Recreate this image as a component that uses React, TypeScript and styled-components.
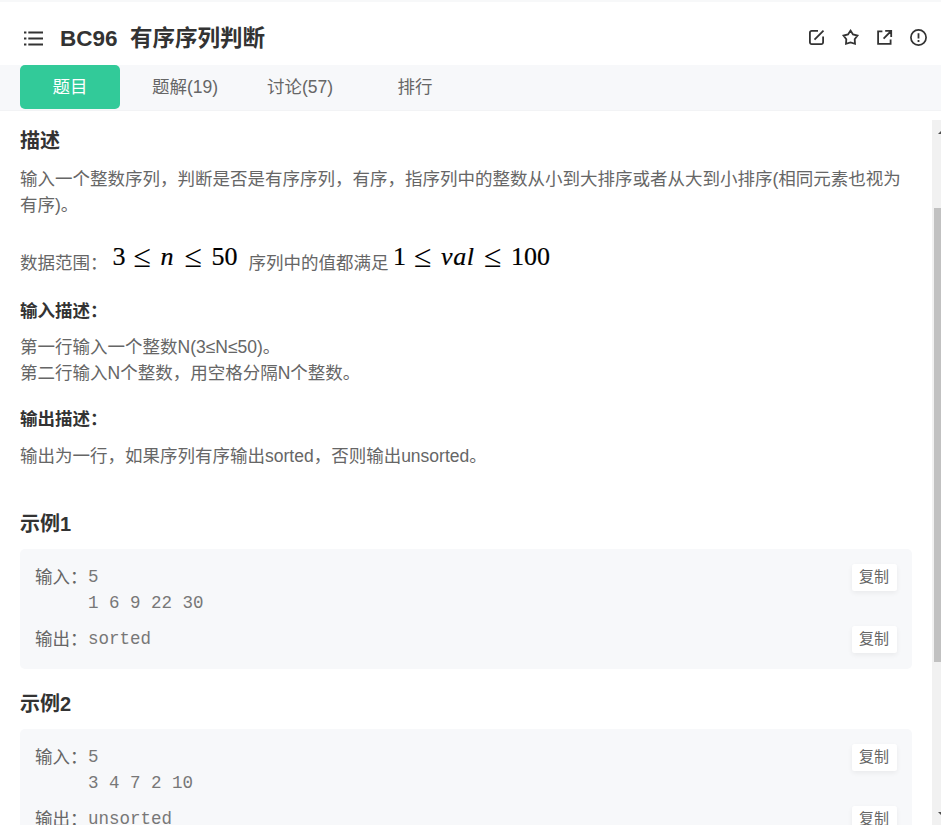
import React from "react";
import styled, { createGlobalStyle } from "styled-components";

const GlobalStyle = createGlobalStyle`
  * { box-sizing: border-box; }
  body {
    margin: 0;
    background: #fff;
    overflow: hidden;
    font-family: "Liberation Sans", "Noto Sans CJK SC", sans-serif;
    font-size: 17.5px;
    line-height: 26.25px;
    color: #666;
  }
`;

const Page = styled.div`
  display: flex;
  flex-direction: column;
  width: 941px;
  height: 825px;
  overflow: hidden;
  border-top: 2px solid #f7f8f9;
`;

const Header = styled.header`
  display: flex;
  align-items: center;
  flex: none;
  height: 63px;
  padding: 0 13px 0 23px;
`;

const Title = styled.h1`
  display: flex;
  gap: 12.5px;
  flex: 1;
  margin: 10px 0 0 16px;
  font-size: 22.5px;
  line-height: 30px;
  font-weight: 700;
  color: #333;
`;

const Icon = styled.svg`
  display: block;
  flex: none;
  margin-top: 8px;
  fill: none;
  stroke: #333;
  stroke-width: 1.8;
`;

const Actions = styled.div`
  display: flex;
  gap: 14px;
`;

const TabBar = styled.nav`
  display: flex;
  flex: none;
  gap: 15px;
  height: 45px;
  padding-left: 20px;
  background: #f7f8fa;
  border-bottom: 1px solid #f2f3f5;
  box-sizing: content-box;
`;

const Tab = styled.a<{ $active?: boolean }>`
  width: 100px;
  height: 44px;
  line-height: 44px;
  text-align: center;
  border-radius: 5px;
  color: ${(p) => (p.$active ? "#fff" : "#666")};
  background: ${(p) => (p.$active ? "#32ca99" : "transparent")};
`;

const Body = styled.div`
  display: flex;
  justify-content: space-between;
  flex: 1;
  min-height: 0;
  padding-top: 9px;
`;

const Content = styled.main`
  width: 892px;
  margin-left: 20px;
  padding-top: 6px;
`;

const SectionTitle = styled.h2`
  margin: 0;
  font-size: 20px;
  line-height: 30px;
  font-weight: 700;
  color: #333;
`;

const SubTitle = styled.h3`
  margin: 0;
  font-size: 17.5px;
  line-height: 26px;
  font-weight: 700;
  color: #333;
`;

const Paragraph = styled.p<{ $top?: number; $bottom?: number }>`
  margin: ${(p) => p.$top ?? 0}px 0 ${(p) => p.$bottom ?? 0}px;
  white-space: nowrap;
`;

const RangeLine = styled.div`
  display: flex;
  align-items: flex-end;
  height: 32px;
  margin: 26px 0 21.5px;
  white-space: nowrap;
`;

const Formula = styled.span<{ $left: number; $right: number }>`
  display: flex;
  align-items: baseline;
  height: 37px;
  margin: 0 ${(p) => p.$right}px 0 ${(p) => p.$left}px;
  font-family: "Liberation Serif", serif;
  font-size: 26px;
  line-height: 30px;
  color: #000;
`;

const Term = styled.span<{ $width: number; $italic?: boolean }>`
  width: ${(p) => p.$width}px;
  font-style: ${(p) => (p.$italic ? "italic" : "normal")};
  letter-spacing: ${(p) => (p.$italic ? "0.6px" : "0")};
  -webkit-text-stroke: 0.2px #000;
`;

const Relation = styled.span`
  width: 27px;
  font-size: 32px;
  line-height: 30px;
  transform: translateY(2px);
`;

const Example = styled.section`
  display: flex;
  flex-direction: column;
  gap: 10px;
  height: 120px;
  margin: 10px 0 20px;
  padding: 15px;
  background: #f7f8fa;
  border-radius: 5px;
  line-height: 26px;
`;

const ExampleRow = styled.div`
  display: flex;
  align-items: flex-start;
`;

const Label = styled.span`
  width: 53px;
`;

const Code = styled.pre`
  flex: 1;
  margin: 0;
  font-family: "Liberation Mono", monospace;
  font-size: 17.5px;
  line-height: 26px;
  color: #777;
`;

const CopyButton = styled.button`
  width: 45px;
  height: 27px;
  padding: 0 1px 1px 0;
  border: 0;
  border-radius: 2.5px;
  background: #fff;
  box-shadow: 0 2px 5px rgba(0, 0, 0, 0.06);
  font-family: inherit;
  font-size: 15px;
  line-height: 26px;
  color: #666;
`;

const ScrollTrack = styled.div`
  display: flex;
  flex-direction: column;
  align-items: flex-end;
  width: 9px;
  background: #f1f1f1;
`;

const Arrow = styled.svg`
  display: block;
  flex: none;
  fill: #505050;
`;

const Thumb = styled.div`
  width: 7px;
  height: 454px;
  margin: 73px 0 149px;
  flex: none;
  background: #c1c1c1;
`;

const examples = [
  { input: "5\n1 6 9 22 30", output: "sorted" },
  { input: "5\n3 4 7 2 10", output: "unsorted" },
];

export default function App() {
  return (
    <>
      <GlobalStyle />
      <Page>
        <Header>
          <Icon width="21" height="20" viewBox="0 0 21 20">
            <path d="M1 4.5h2.4M1 10.5h2.4M1 16.5h2.4M5.3 4.5H20M5.3 10.5H20M5.3 16.5H20" strokeWidth="2.1" />
          </Icon>
          <Title>
            <span>BC96</span>
            <span>有序序列判断</span>
          </Title>
          <Actions>
            <Icon width="20" height="20" viewBox="-0.5 0.5 20 20">
              <path d="M11.5 3.4H5.2a1.8 1.8 0 0 0-1.8 1.8v9.6a1.8 1.8 0 0 0 1.8 1.8h9.6a1.8 1.8 0 0 0 1.8-1.8V9M8 12.2l9-9.1" />
            </Icon>
            <Icon width="20" height="20" viewBox="-0.5 0.5 20 20">
              <path d="M10 3.1L12.5 6.9L17 8.1L14.2 11.7L14.5 16.3L10 15L5.5 16.3L5.8 11.7L3 8.1L7.5 6.9Z" />
            </Icon>
            <Icon width="20" height="20" viewBox="-0.5 0.5 20 20">
              <path d="M7.9 3.9H3.6v12.5h12.5v-4.3M10.7 3.4h6v6M16.6 3.5l-7.5 7.7" />
            </Icon>
            <Icon width="20" height="20" viewBox="-0.5 0.5 20 20">
              <circle cx="10" cy="10" r="7.6" strokeWidth="1.7" />
              <path d="M10 5.7v5.3M10 12.5v1.9" />
            </Icon>
          </Actions>
        </Header>
        <TabBar>
          <Tab $active>题目</Tab>
          <Tab>题解(19)</Tab>
          <Tab>讨论(57)</Tab>
          <Tab>排行</Tab>
        </TabBar>
        <Body>
          <Content>
            <SectionTitle>描述</SectionTitle>
            <Paragraph $top={9.5}>
              输入一个整数序列，判断是否是有序序列，有序，指序列中的整数从小到大排序或者从大到小排序(相同元素也视为
              <br />
              有序)。
            </Paragraph>
            <RangeLine>
              <span>数据范围：</span>
              <Formula $left={5} $right={11}>
                <Term $width={21}>3</Term>
                <Relation>≤</Relation>
                <Term $width={24} $italic>n</Term>
                <Relation>≤</Relation>
                <Term $width={26}>50</Term>
              </Formula>
              <span>序列中的值都满足</span>
              <Formula $left={4.5} $right={0}>
                <Term $width={21}>1</Term>
                <Relation>≤</Relation>
                <Term $width={43} $italic>val</Term>
                <Relation>≤</Relation>
                <Term $width={40}>100</Term>
              </Formula>
            </RangeLine>
            <SubTitle>输入描述：</SubTitle>
            <Paragraph $top={10} $bottom={20}>
              第一行输入一个整数N(3≤N≤50)。
              <br />
              第二行输入N个整数，用空格分隔N个整数。
            </Paragraph>
            <SubTitle>输出描述：</SubTitle>
            <Paragraph $top={11} $bottom={40}>
              输出为一行，如果序列有序输出sorted，否则输出unsorted。
            </Paragraph>
            {examples.map((item, i) => (
              <React.Fragment key={item.output}>
                <SectionTitle>示例{i + 1}</SectionTitle>
                <Example>
                  <ExampleRow>
                    <Label>输入：</Label>
                    <Code>{item.input}</Code>
                    <CopyButton>复制</CopyButton>
                  </ExampleRow>
                  <ExampleRow>
                    <Label>输出：</Label>
                    <Code>{item.output}</Code>
                    <CopyButton>复制</CopyButton>
                  </ExampleRow>
                </Example>
              </React.Fragment>
            ))}
          </Content>
          <ScrollTrack>
            <Arrow width="3" height="15" viewBox="0 0 3 15">
              <path d="M0 14L3 11v3z" />
            </Arrow>
            <Thumb />
            <Arrow width="3" height="8" viewBox="0 0 3 8">
              <path d="M0 1h3v3z" />
            </Arrow>
          </ScrollTrack>
        </Body>
      </Page>
    </>
  );
}
